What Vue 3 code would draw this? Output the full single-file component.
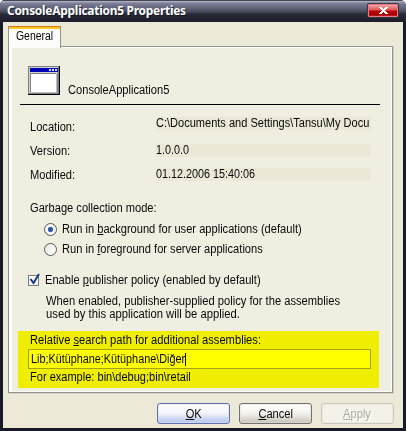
<script setup>
import { ref } from 'vue'

const details = [
  { label: 'Location:', value: 'C:\\Documents and Settings\\Tansu\\My Docu', kind: 'location' },
  { label: 'Version:', value: '1.0.0.0', kind: 'version' },
  { label: 'Modified:', value: '01.12.2006 15:40:06', kind: 'modified' },
]
const mode = ref('background')
const policy = ref(true)
</script>

<template>
  <div class="window">
    <header class="titlebar">
      <h1 class="title">ConsoleApplication5 Properties</h1>
      <button class="close" aria-label="Close">
        <svg width="9" height="7" viewBox="0 0 9 7" shape-rendering="crispEdges"><path d="M0 0h3v1h1v1h1v-1h1v-1h3v1h-1v1h-1v1h-1v1h1v1h1v1h1v1h-3v-1h-1v-1h-1v1h-1v1h-3v-1h1v-1h1v-1h1v-1h-1v-1h-1v-1h-1z" fill="#fff" /></svg>
      </button>
    </header>
    <main class="body">
      <div class="tabs"><div class="tab"><span class="text tab-text">General</span></div></div>
      <section class="panel">
        <div class="app">
          <svg class="app-icon" width="32" height="29" viewBox="0 0 32 29" shape-rendering="crispEdges">
            <rect width="32" height="29" fill="#000" />
            <rect width="31" height="28" fill="#808080" />
            <rect x="1" y="1" width="29" height="26" fill="#d0d0d0" />
            <rect x="2" y="2" width="28" height="4" fill="#0000b8" />
            <rect x="2" y="7" width="28" height="20" fill="#808080" />
            <rect x="3" y="8" width="26" height="19" fill="#fff" />
            <path d="M21 3h2v2h-2zM24 3h2v2h-2zM27 3h2v2h-2z" fill="#d8d8d8" />
            <path d="M29 7v20h-27v-1h26v-19z" fill="#c0c0c0" />
          </svg>
          <span class="text app-name">ConsoleApplication5</span>
        </div>
        <dl class="details">
          <div v-for="d in details" :key="d.kind" class="detail" :class="d.kind">
            <dt><span class="text">{{ d.label }}</span></dt>
            <dd><span class="text">{{ d.value }}</span></dd>
          </div>
        </dl>
        <div class="group-label"><span class="text">Garbage collection mode:</span></div>
        <div class="option" @click="mode = 'background'">
          <i class="radio" :class="{ on: mode === 'background' }"></i>
          <span class="text">Run in <u>b</u>ackground for user applications (default)</span>
        </div>
        <div class="option" @click="mode = 'foreground'">
          <i class="radio" :class="{ on: mode === 'foreground' }"></i>
          <span class="text">Run in <u>f</u>oreground for server applications</span>
        </div>
        <div class="policy" @click="policy = !policy">
          <svg width="13" height="14" viewBox="0 0 13 14">
            <rect x=".5" y="2.5" width="10" height="10" fill="#fafaf7" stroke="#777a80" />
            <path v-if="policy" d="M2.5 6l3 4L11 1" fill="none" stroke="#16368c" stroke-width="2" />
          </svg>
          <span class="text">Enable <u>p</u>ublisher policy (enabled by default)</span>
        </div>
        <p class="note">
          <span class="text note-a">When enabled, publisher-supplied policy for the assemblies</span>
          <span class="text note-b">used by this application will be applied.</span>
        </p>
        <div class="search">
          <div class="search-label"><span class="text">Relative <u>s</u>earch path for additional assemblies:</span></div>
          <div class="field"><span class="text">Lib;Kütüphane;Kütüphane\Diğer</span><i class="caret"></i></div>
          <div class="example"><span class="text">For example: bin\debug;bin\retail</span></div>
        </div>
      </section>
      <footer class="buttons">
        <button class="btn ok"><span class="text"><u>O</u>K</span></button>
        <button class="btn cancel"><span class="text"><u>C</u>ancel</span></button>
        <button class="btn apply" disabled><span class="text"><u>A</u>pply</span></button>
      </footer>
    </main>
  </div>
</template>

<style>
body { background: #fff; overflow: hidden; }
</style>

<style scoped>
* { box-sizing: border-box; margin: 0; }
.window {
  width: 406px; height: 431px; padding: 0 3px 3px; overflow: hidden;
  background: #191a28; border-radius: 5px 6px 0 0;
  font: 12px/14px "Liberation Sans", Arial, sans-serif; color: #080808; white-space: nowrap;
}
.text { display: block; width: max-content; transform: scaleX(.926); transform-origin: 0 0; }
.titlebar {
  height: 22px; margin: 0 -3px; padding: 0 8px 0 7px; display: flex; justify-content: space-between; align-items: flex-start;
  background: linear-gradient(#454655 0, #454655 1px, #c1c2d4 1px, #9798ad 2px, #777a91 4px, #5c5f74 9px, #454859 12px, #292a38 14px, #1d1c29 22px);
}
.title { font: bold 12px/21px "Noto Sans", sans-serif; color: #fff; text-shadow: 1px 1px #171724; letter-spacing: -.29px; }
.close {
  width: 30px; height: 13px; margin-top: 4px; padding: 0; display: flex; align-items: center; justify-content: center;
  border: 1px solid #e77c80; border-radius: 1px; box-shadow: 0 0 0 1px #373747;
  background: linear-gradient(#f7a2a2, #df5455 5px, #bd0508 6px, #a10003 10px, #d92d30);
}
.body { height: 406px; padding: 4px 9px 0 5px; background: #ece9d8; }
.tabs { height: 20px; }
.tab {
  width: 53px; height: 22px; position: relative; padding: 3px 0 0 7px; border: 1px solid #91948a; border-top: 0; border-bottom: 0;
  background: linear-gradient(#d17b08 0, #d17b08 1px, #ffc42c 1px, #ffc42c 3px, #fcfcfa 3px, #fcfcfa);
}
.tab-text { transform: scaleX(.87); }
.panel {
  width: 385px; height: 347px; padding: 18px 10px 0 9px; border: 1px solid #91948a;
  background: #f0eee1; box-shadow: inset 3px 1px #fcfcfa, inset -1px -1px #fcfcfa, 1px 1px #d5d2c3;
}
.app { height: 40px; padding-left: 8px; margin: 0 2px; display: flex; gap: 8px; border-bottom: 1px solid #000; }
.app-icon { margin-top: 1px; }
.app-name { padding-top: 18px; }
.details { padding: 12px 11px 0 12px; }
.detail { height: 24px; display: flex; justify-content: space-between; }
dt { padding-top: 3px; }
dd { width: 215px; height: 13px; background: #ebe8d7; line-height: 13px; }
.version dd, .modified dd { margin-top: 3px; }
.location dd .text { transform: scaleX(.919); }
.version dd .text, .modified dd .text { transform: scaleX(.9); }
.group-label { height: 30px; padding: 12px 0 0 12px; }
.option { height: 20px; padding-left: 26px; display: flex; gap: 5px; align-items: center; }
.radio { width: 13px; height: 13px; border: 1px solid #55585b; border-radius: 50%; background: linear-gradient(135deg, #e8e8e3, #fff); }
.radio.on { background: radial-gradient(circle, #2b4c94 0, #4065b4 2.3px, #f8f8f6 3.1px); }
.policy { height: 36px; padding: 14px 0 0 10px; display: flex; gap: 4px; align-items: flex-start; }
.note { height: 36px; padding-left: 28px; line-height: 13px; }
.note-a { transform: scaleX(.93); }
.note-b { transform: scaleX(.937); }
.search { height: 57px; width: 361px; padding: 2px 8px 0 10px; background: #f0ee00; }
.search-label, .example { padding-left: 2px; }
.search-label .text { transform: scaleX(.931); }
.field { height: 20px; margin-top: 2px; padding: 2px 0 0 2px; display: flex; background: #ff0; border: 1px solid #a7a414; }
.field .text { transform: scaleX(.902); }
.caret { width: 1px; height: 13px; margin: 1px 0 0 -17px; background: #000; }
.example { padding-top: 1px; }
.example .text { transform: scaleX(.92); }
.buttons { display: flex; justify-content: flex-end; gap: 9px; padding-top: 10px; }
.btn {
  width: 73px; height: 21px; padding: 0; display: flex; align-items: center; justify-content: center;
  border: 1px solid #717171; border-radius: 3px; font: inherit; color: #080808;
  background: linear-gradient(#fff, #f4f3ef 9px, #dad6cd 15px, #c6c1b7); box-shadow: inset 0 0 0 1px #e5e2da88;
}
.btn .text { transform-origin: 50% 0; }
.btn.ok { border-color: #5970b5; background: linear-gradient(#fff, #f5f6fc 9px, #cad4f1 15px, #b5c4ed); }
.btn.apply { border-color: #cac7ba; background: #f4f2e8; color: #aaa89d; text-shadow: 1px 1px #fff; }
u { text-underline-offset: 1px; }
</style>
